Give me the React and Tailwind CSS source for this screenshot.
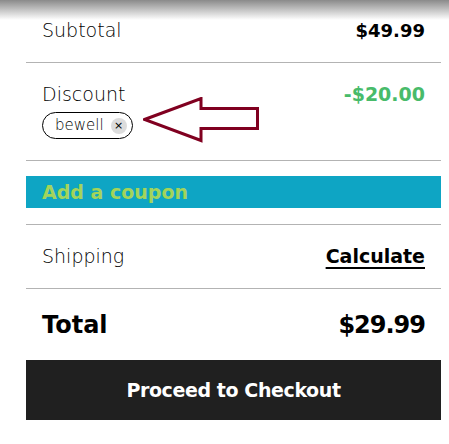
import React from "react";

export default function App() {
  const font = { fontFamily: "'DejaVu Sans', 'Noto Sans', sans-serif" };
  return (
    <div className="relative w-[449px] h-[444px] bg-white overflow-hidden" style={font}>
      <div className="absolute top-0 left-0 w-full h-[20px] bg-gradient-to-b from-[#8a8a8a] to-white/0 pointer-events-none" />
      <div className="ml-[26px] w-[415px] flex flex-col text-black">
        <div className="h-[63px] flex items-center justify-between px-4 border-b border-[#b3b3b3]">
          <span className="text-[19px] font-light text-black pb-[2px]">Subtotal</span>
          <span className="text-[18px] font-bold pb-[2px]">$49.99</span>
        </div>
        <div className="h-[98px] border-b border-[#b3b3b3] px-4 pt-[18px] relative">
          <div className="flex items-start justify-between">
            <span className="text-[19px] font-light leading-[26px]">Discount</span>
            <span className="text-[19px] font-bold text-[#48bb6a] leading-[26px]">-$20.00</span>
          </div>
          <div className="mt-[5px] inline-flex items-center h-[27px] rounded-full border border-black pl-[12px] pr-[5px] gap-[7px]">
            <span className="text-[15px] font-light">bewell</span>
            <span className="w-[16px] h-[16px] rounded-full bg-[#dcdcdc] flex items-center justify-center text-[11px] leading-none">×</span>
          </div>
          <svg className="absolute left-[117px] top-[34px]" width="118" height="46" viewBox="0 0 118 46">
            <polygon points="1.5,22.5 58,1.5 58,11.5 114.5,11.5 114.5,31.5 58,31.5 58,43.5" fill="none" stroke="#800020" strokeWidth="3" strokeLinejoin="miter" />
          </svg>
        </div>
        <div className="mt-[15px] h-[32px] bg-[#0ea5c4] px-4 flex items-center">
          <span className="text-[19px] font-bold text-[#a3d45a]">Add a coupon</span>
        </div>
        <div className="mt-[16px] h-[65px] border-t border-b border-[#b3b3b3] flex items-center justify-between px-4">
          <span className="text-[19px] font-light">Shipping</span>
          <span className="text-[19px] font-bold underline underline-offset-4 decoration-2">Calculate</span>
        </div>
        <div className="h-[71px] flex items-center justify-between px-4">
          <span className="text-[24px] font-bold">Total</span>
          <span className="text-[24px] font-bold tracking-[-1px]">$29.99</span>
        </div>
        <div className="h-[60px] bg-[#202020] flex items-center justify-center">
          <span className="text-[19px] font-bold text-white tracking-[-0.4px]">Proceed to Checkout</span>
        </div>
      </div>
    </div>
  );
}
